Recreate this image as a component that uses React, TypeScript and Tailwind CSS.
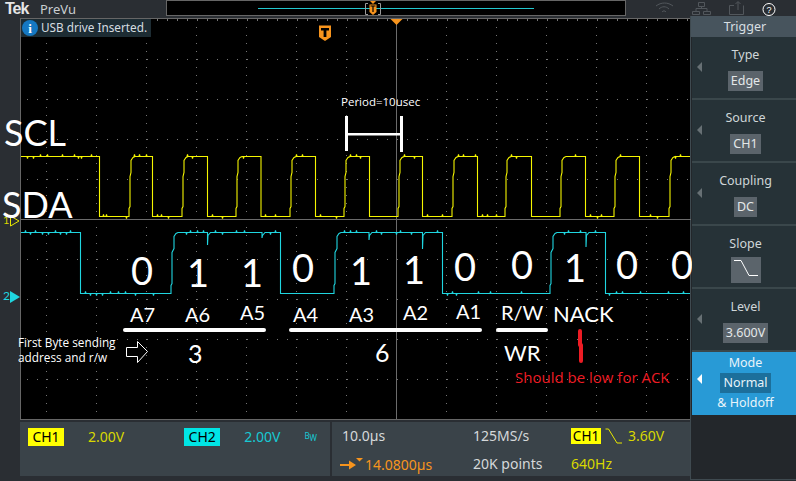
import React from 'react';

const W = 670;
const H = 400;
const OX = 21;
const OY = 19;

// builds a stepped trace from edge positions, x/y are in page coordinates
function trace(start: number, end: number, high: number, low: number, edges: number[], ripple: number[], dips: [number, number][], slant: number) {
    const levelAt = (x: number) => {
        let l = true;
        for (const e of edges) if (x > e) l = !l;
        return l;
    };
    let d = `M${start - OX} ${high - OY}`;
    const xs = Array.from(new Set([...edges, ...ripple, ...dips.map(p => p[0])])).sort((a, b) => a - b);
    for (const x of xs) {
        const y = (levelAt(x - 0.01) ? high : low) - OY;
        const px = x - OX;
        if (edges.includes(x)) {
            const rising = !levelAt(x - 0.01);
            const next = (rising ? high : low) - OY;
            if (rising) {
                d += `L${px - 1} ${y}L${px - 1} ${y - 8}L${px} ${y - 10}L${px} ${next + 20}L${px + slant} ${next + 16}L${px + slant} ${next + 4}L${px + slant + 2} ${next + 1}L${px + slant + 4} ${next}`;
            } else {
                d += `L${px} ${y}L${px} ${next}`;
            }
        } else if (dips.some(p => p[0] === x)) {
            const dip = dips.find(p => p[0] === x)!;
            d += `L${px} ${y}L${px} ${dip[1] - OY}L${px + 0.5} ${y + 3}L${px + 3} ${y}`;
        } else {
            const k = Math.round(x * 7) % 3 === 0 ? 2 : -2;
            d += `L${px} ${y}L${px + 0.5} ${y + k}L${px + 1} ${y}`;
        }
    }
    d += `L${end - OX} ${(levelAt(end) ? high : low) - OY}`;
    return d;
}

const YELLOW_EDGES = [99.5, 130, 152.5, 183, 207.5, 237, 261, 291, 315.5, 345, 369.5, 399, 422.5, 453, 477.5, 506, 531.5, 561, 585.5, 615, 639.5, 670];
const YELLOW_RIPPLE = [27, 33, 40, 47, 62, 74, 78, 81, 91, 103, 106, 126, 134, 139, 146, 157, 161, 168, 187, 192, 212, 222, 243, 265, 275, 296, 302, 320, 336, 350, 356, 360, 404, 414, 427, 442, 458, 463, 475, 482, 487, 496, 511, 516, 575, 590, 597, 601, 620, 650, 657, 675, 680];
const CYAN_EDGES = [80.5, 172, 280.5, 335, 442.5, 551, 605.5];
const CYAN_RIPPLE = [25, 30, 35, 42, 48, 55, 60, 66, 70, 85, 90, 96, 102, 110, 118, 125, 135, 153, 186, 190, 197, 203, 215, 222, 236, 244, 270, 275, 344, 350, 356, 376, 381, 396, 400, 411, 437, 447, 452, 456, 478, 490, 521, 564, 568, 580, 595, 609, 616, 622, 640, 668, 683];
const CYAN_DIPS: [number, number][] = [[207.5, 245], [262, 238], [369, 240], [422.5, 249], [586, 247]];

const YELLOW_PATH = trace(21, 690, 156.5, 216.5, YELLOW_EDGES, YELLOW_RIPPLE, [], 1);
const CYAN_PATH = trace(21, 690, 232.5, 293.5, CYAN_EDGES, CYAN_RIPPLE, CYAN_DIPS, 2);

const DIGITS: [string, number, number][] = [
    ['0', 110, 229],
    ['1', 166, 231],
    ['1', 220, 231],
    ['0', 271, 226],
    ['1', 329, 229],
    ['1', 382, 228],
    ['0', 433, 225],
    ['0', 490, 223],
    ['1', 543, 226],
    ['0', 595, 223],
    ['0', 650, 223],
];

const BITS: [string, number, number][] = [
    ['A7', 109, 283],
    ['A6', 164, 283],
    ['A5', 219, 281],
    ['A4', 272, 283],
    ['A3', 328, 283],
    ['A2', 382, 281],
    ['A1', 435, 280],
    ['R/W', 480, 281],
];

const Graticule = () => {
    const dots: React.ReactNode[] = [];
    // horizontal dotted rows, 40px apart
    for (let r = 0; r <= 10; r++) {
        for (let x = 6; x < W; x += 10) {
            dots.push(<rect key={`h${r}-${x}`} x={x} y={r * 40} width="1" height={r === 0 ? 2 : 1} fill="#757575" />);
        }
    }
    // vertical dotted columns, 50px apart
    for (let c = 0; c < 14; c++) {
        for (let y = 8; y < H; y += 8) {
            dots.push(<rect key={`v${c}-${y}`} x={25 + c * 50} y={y} width="1" height="1" fill="#757575" />);
        }
    }
    return (
        <>
            {dots}
            <line x1="0" x2={W} y1="200.5" y2="200.5" stroke="#6b6b6b" />
            <line x1="375.5" x2="375.5" y1="0" y2={H} stroke="#6b6b6b" />
        </>
    );
};

const Screen = () => (
    <div className="relative h-[400px] w-[669px] bg-black font-['Lato',sans-serif] text-white">
        <svg className="absolute inset-0 overflow-hidden" width={W} height={H} viewBox={`0 0 ${W} ${H}`}>
            <Graticule />
            <path d={YELLOW_PATH} fill="none" stroke="#f5f500" strokeWidth="1.1" />
            <path d={CYAN_PATH} fill="none" stroke="#1fd6e0" strokeWidth="1.1" />
            {/* period marker */}
            <rect x="324" y="97" width="3" height="35" fill="#fff" />
            <rect x="379" y="97" width="3" height="36" fill="#fff" />
            <rect x="327" y="114" width="52" height="2.5" fill="#fff" />
            {/* byte underlines */}
            <rect x="102" y="309" width="143" height="4" rx="2" fill="#fff" />
            <rect x="268" y="309" width="193" height="4" rx="2" fill="#fff" />
            <rect x="475" y="309" width="52" height="4" rx="2" fill="#fff" />
            {/* hand drawn NACK mark */}
            <path d="M559 312V326M560 326V342" stroke="#ed1c24" strokeWidth="4" strokeLinecap="round" fill="none" />
            {/* arrow */}
            <path d="M105.5 328.5H116.5V322.5L126.5 332.5L116.5 343.5V337.5H105.5Z" fill="none" stroke="#fff" />
            {/* trigger T */}
            <path d="M298 6.5H310V18L304 22L298 18Z" fill="#f7941d" />
            <path d="M300 9H308V11.5H305.4V18H302.6V11.5H300Z" fill="#000" />
            <path d="M369.5 0H381.5L375.5 6Z" fill="#f7941d" />
        </svg>

        {/* channel markers in the left gutter */}
        <span className="absolute left-[-18px] top-[194px] text-[11px] leading-[14px] text-[#d8d800]">1</span>
        <svg className="absolute left-[-11px] top-[196px]" width="10" height="12" viewBox="0 0 10 12">
            <path d="M0.5 1L9 6L0.5 11Z" fill="none" stroke="#e8e800" />
        </svg>
        <span className="absolute left-[-18px] top-[270px] text-[12px] leading-[14px] text-[#1fd6e0]">2</span>
        <svg className="absolute left-[-11px] top-[272px]" width="10" height="12" viewBox="0 0 10 12">
            <path d="M0 0L10 6L0 12Z" fill="#1fd6e0" />
        </svg>

        <div className="absolute left-0 top-0 flex h-[18px] w-[130px] items-center gap-[3px] bg-[#1d2c33] pl-[1px] font-['Noto_Sans',sans-serif]">
            <span className="flex size-[16px] items-center justify-center rounded-full bg-[#1578c2] font-['Liberation_Serif',serif] text-[13px] font-bold leading-none text-white">i</span>
            <span className="whitespace-nowrap text-[11.75px] leading-none text-[#d5dde0]">USB drive Inserted.</span>
        </div>

        <span className="absolute left-[320px] top-[76px] whitespace-nowrap font-['Open_Sans',sans-serif] text-[11.5px] leading-[14px]">Period=10usec</span>
        <span className="absolute left-[-17px] top-[89px] text-[36px] leading-[48px]">SCL</span>
        <span className="absolute left-[-19px] top-[161px] text-[36px] leading-[48px]">SDA</span>

        {DIGITS.map(([t, x, y], i) => (
            <span key={i} className="absolute text-[38px] leading-[44px]" style={{left: x, top: y}}>
                {t}
            </span>
        ))}

        {BITS.map(([t, x, y]) => (
            <span key={t} className="absolute text-[20px] leading-[24px]" style={{left: x, top: y}}>
                {t}
            </span>
        ))}

        <span className="absolute left-[532px] top-[281px] text-[22px] leading-[28px]">NACK</span>
        <span className="absolute left-[167px] top-[320px] text-[25px] leading-[28px]">3</span>
        <span className="absolute left-[354px] top-[319px] text-[25px] leading-[28px]">6</span>
        <span className="absolute left-[483px] top-[320px] text-[22px] leading-[28px]">WR</span>
        <span className="absolute left-[-3px] top-[316px] whitespace-nowrap font-['Open_Sans',sans-serif] text-[11.8px] leading-[15px]">
            First Byte sending
            <br />
            address and r/w
        </span>
        <span className="absolute left-[494px] top-[349px] whitespace-nowrap font-['Open_Sans',sans-serif] text-[15px] leading-[18px] text-[#ed1c24]">Should be low for ACK</span>
    </div>
);

const TopBar = () => (
    <div className="flex h-[18px] items-start">
        <span className="ml-[5px] w-[35px] font-['Liberation_Sans',sans-serif] text-[16px] font-bold leading-[17px] tracking-[-1px] text-[#e6e6e6]">Tek</span>
        <span className="w-[126px] text-[13px] leading-[19px] text-[#c9cdd0]">PreVu</span>
        <div className="flex h-[16px] w-[460px] items-center border border-[#666] bg-black">
            <div className="relative ml-[91px] h-[1px] w-[276px] bg-[#22c7cf]">
                <svg className="absolute left-[105px] top-[-7px]" width="20" height="16" viewBox="0 0 20 16">
                    <path d="M5 2.5H2.5V13.5H5M15 2.5H17.5V13.5H15" fill="none" stroke="#9a9a9a" />
                    <path d="M6.5 3.5H13.5V11L10 14L6.5 11Z" fill="#f7941d" />
                    <path d="M7.5 5H12.5M10 5V11" stroke="#000" strokeWidth="1.2" />
                    <path d="M7 0H13L10 3Z" fill="#f7941d" />
                </svg>
            </div>
        </div>
    </div>
);

const BottomBar = () => (
    <div className="flex h-[57px] gap-[2px] pl-[20px] pt-[2px]">
        <div className="flex h-[54px] w-[310px] items-start bg-[#3a4349] pl-[8px] pt-[6px]">
            <span className="h-[18px] w-[36px] bg-[#ffff00] text-center text-[14px] leading-[18px] text-black">CH1</span>
            <span className="ml-[24px] text-[14px] leading-[18px] text-[#d8d800]">2.00V</span>
            <span className="ml-[60px] h-[18px] w-[36px] bg-[#00e5e5] text-center text-[14px] leading-[18px] text-black">CH2</span>
            <span className="ml-[24px] text-[14px] leading-[18px] text-[#17c9d3]">2.00V</span>
            <span className="ml-[24px] mt-[4px] text-[8px] leading-[8px] text-[#17c9d3]">B<sub className="text-[8px]">W</sub></span>
        </div>
        <div className="grid h-[54px] w-[358px] grid-cols-[131px_98px_1fr] grid-rows-[28px_26px] bg-[#3a4349] pl-[10px] pt-[2px] text-[14px] leading-[24px] text-[#d5d8da]">
            <span>10.0µs</span>
            <span>125MS/s</span>
            <span className="flex items-center pb-[4px] text-[#d8d800]">
                <span className="h-[16px] w-[30px] bg-[#ffff00] text-center text-[13.5px] leading-[16px] text-black">CH1</span>
                <svg width="18" height="20" viewBox="0 0 18 20" className="ml-[4px]">
                    <path d="M0.5 3H3.5L12 17H17" fill="none" stroke="#e8e800" />
                </svg>
                <span className="ml-[5px]">3.60V</span>
            </span>
            <span className="flex items-center text-[#f7941d]">
                <svg width="24" height="14" viewBox="0 0 24 14" className="-ml-[2px] mr-[1px] shrink-0">
                    <path d="M0 6H9V2.5L16 7L9 11.500V8H0Z" fill="#f7941d" />
                    <path d="M16 0H23L19.500 3.500Z" fill="#f7941d" />
                </svg>
                14.0800µs
            </span>
            <span>20K points</span>
            <span className="text-[#d8d800]">640Hz</span>
        </div>
    </div>
);

const MenuItem = ({label, value, arrow = true}: {label: string; value: React.ReactNode; arrow?: boolean}) => (
    <div className="relative flex h-[63px] flex-col items-center border-b-2 border-[#3a474b] bg-[#263237] pl-[3px]">
        {arrow && <span className="absolute left-[5px] top-[25px] h-0 w-0 border-y-[5px] border-r-[5px] border-y-transparent border-r-[#677074]" />}
        <span className="mt-[8px] text-[12.5px] leading-[20px] text-[#cfd6d8]">{label}</span>
        <span className="mt-[6px] flex h-[20px] items-center bg-[#5b646b] px-[3px] text-[12.5px] leading-[20px] text-[#e4e8e9]">{value}</span>
    </div>
);

const TriggerPanel = () => (
    <div className="flex h-[464px] flex-col border-b border-l border-[#3f4a50] bg-[#23272b] pl-[1px]">
        <div className="-ml-[1px] flex h-[21px] items-center justify-center bg-[#47545d] pl-[3px] pt-[2px] text-[12.5px] text-[#d8dfe2]">Trigger</div>
        <MenuItem label="Type" value="Edge" />
        <MenuItem label="Source" value="CH1" />
        <MenuItem label="Coupling" value="DC" />
        <MenuItem
            label="Slope"
            arrow={false}
            value={
                <svg width="30" height="26" viewBox="0 0 30 26" className="-mx-[3px]">
                    <rect width="30" height="26" fill="#5b646b" />
                    <path d="M3 3.5H10L18 18.5H27" fill="none" stroke="#fff" />
                </svg>
            }
        />
        <MenuItem label="Level" value="3.600V" />
        <div className="relative flex h-[63px] flex-col items-center bg-[#289ad6] pl-[3px] text-[12.5px] leading-[20px] text-[#e8f4fa]">
            <span className="absolute left-[5px] top-[22px] h-0 w-0 border-y-[5px] border-r-[5px] border-y-transparent border-r-white" />
            <span className="mt-[1px]">Mode</span>
            <span className="h-[20px] bg-[#1c6f9b] px-[3px]">Normal</span>
            <span>&amp; Holdoff</span>
        </div>
    </div>
);

const StatusIcons = () => (
    <div className="flex h-[16px] items-start">
        <svg className="overflow-visible" width="106" height="16" viewBox="0 0 106 16" fill="none">
            <g stroke="#52575c">
                <path d="M-34 6C-29 2 -22 2 -17 6M-31 9C-28 6 -24 6 -21 9M-28 12C-27 10.500 -25 10.500 -24 12" />
                <path d="M8.500 2.500H14.500V6.500H8.500ZM2.500 11.500H9.500V14.500H2.500ZM13.500 11.500H20.500V14.500H13.500ZM6 11.500V8.500H17V11.500M11.500 6.500V8.500" />
                <path d="M44 5.500H39.500V14.500H53.500V5.500M48 10V2M45.500 4L48 1.500L50.500 4" />
            </g>
            <circle cx="79" cy="9.500" r="6" stroke="#fff" />
            <text x="79" y="13" textAnchor="middle" fontSize="9" fill="#fff" fontFamily="Liberation Sans, sans-serif">?</text>
        </svg>
    </div>
);

export default function App() {
    return (
        <div className="flex h-[481px] w-[796px] overflow-hidden bg-[#2a2e33] font-['Noto_Sans',sans-serif]">
            <div className="flex w-[690px] flex-col">
                <TopBar />
                <div className="ml-[20px] w-[670px] border-y border-l border-[#666]">
                    <Screen />
                </div>
                <BottomBar />
            </div>
            <div className="flex w-[106px] flex-col">
                <StatusIcons />
                <TriggerPanel />
            </div>
        </div>
    );
}
